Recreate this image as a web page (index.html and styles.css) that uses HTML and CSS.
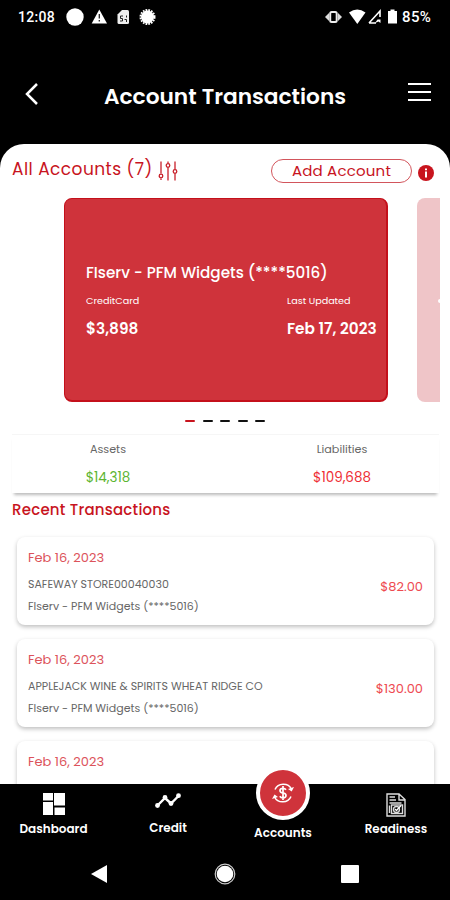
FILE: index.html
```html
<!DOCTYPE html>
<html lang="en">
<head>
    <meta charset="UTF-8">
    <meta name="viewport" content="width=device-width, initial-scale=1.0">
    <title>Account Transactions</title>
    <link rel="stylesheet" href="styles.css">
</head>
<body>
    <div class="status">
        <span class="clock">12:08</span>
        <svg class="status-left" width="92" height="20" viewBox="0 0 92 20" fill="#fff">
            <circle cx="9" cy="10" r="8.7"/>
            <path d="M33.3 2.5 41 16.5H25.7Z"/>
            <path d="M33.3 7v4.5M33.3 13v1.6" stroke="#222" stroke-width="1.3"/>
            <path d="M56 3h5.500a1.500 1.500 0 0 1 1.500 1.500v11a1.500 1.500 0 0 1-1.500 1.500h-8.500a1.500 1.500 0 0 1-1.500-1.500V7.500Z" fill="#eee"/>
            <path d="M57 9h-2.500v2.500h2V14h-2.500M60.500 8.500v2M58.500 12.500h2V15" fill="none" stroke="#222"/>
            <circle cx="81.500" cy="10" r="6.500"/>
            <circle cx="81.500" cy="10" r="7" fill="none" stroke="#fff" stroke-width="2" stroke-dasharray="1.700 1.100"/>
        </svg>
        <svg class="status-right" width="76" height="20" viewBox="0 0 76 20" fill="#fff">
            <path d="M0 10 4 6v8ZM17 10l-4-4v8Z" fill="#ddd"/>
            <rect x="5.200" y="5" width="6.500" height="10" rx="1.500" fill="none" stroke="#eee" stroke-width="2"/>
            <path d="M24 5.500Q32.300-.5 40.500 5.500L32.300 17Z"/>
            <path d="M44 16 55 4v6M44 16h7" fill="none" stroke="#fff" stroke-width="1.600"/>
            <path d="m50 16 2.500-3.500h3V16l-2-1.500Z"/>
            <path d="M65.500 2.500h4V4H72v12.500h-9V4h2.500Z"/>
        </svg>
        <span class="battery">85%</span>
    </div>

    <header class="header">
        <svg class="back" width="14" height="22" viewBox="0 0 14 22"><path d="M12 1 2 11l10 10" fill="none" stroke="#fff" stroke-width="2.500"/></svg>
        <h1>Account Transactions</h1>
        <div class="menu"><i></i><i></i><i></i></div>
    </header>

    <main class="sheet">
        <div class="toolbar">
            <span class="all">All Accounts (7)</span>
            <svg class="filter" width="20" height="20" viewBox="0 0 20 20" fill="none" stroke="#c8202a" stroke-width="1.300">
                <path d="M3 .5v12M3 17.500V19M10 .5v2M10 6.500V19.500M17 .5v8M17 12.500v7"/>
                <circle cx="3" cy="15" r="1.800"/><circle cx="10" cy="4.500" r="1.800"/><circle cx="17" cy="10.500" r="1.800"/>
            </svg>
            <button class="add">Add Account</button>
            <svg class="info" width="16" height="16" viewBox="0 0 16 16"><circle cx="8" cy="8" r="8" fill="#c8141e"/><path d="M8 3.500v1.800M8 6.500v6" stroke="#fff" stroke-width="2"/></svg>
        </div>

        <section class="carousel">
            <div class="account">
                <div class="account-name">FIserv - PFM Widgets (****5016)</div>
                <div class="account-info">
                    <div>
                        <div class="label">CreditCard</div>
                        <div class="value">$3,898</div>
                    </div>
                    <div>
                        <div class="label">Last Updated</div>
                        <div class="value">Feb 17, 2023</div>
                    </div>
                </div>
            </div>
            <div class="account next"><i></i></div>
        </section>
        <div class="dots"><i class="active"></i><i></i><i></i><i></i><i></i></div>

        <section class="summary">
            <div class="assets">
                <span>Assets</span>
                <b>$14,318</b>
            </div>
            <div class="liabilities">
                <span>Liabilities</span>
                <b>$109,688</b>
            </div>
        </section>

        <h2>Recent Transactions</h2>
        <section class="list">
            <article class="item">
                <div>
                    <div class="date">Feb 16, 2023</div>
                    <div class="store">SAFEWAY STORE00040030</div>
                    <div class="source">FIserv - PFM Widgets (****5016)</div>
                </div>
                <span class="amount">$82.00</span>
            </article>
            <article class="item">
                <div>
                    <div class="date">Feb 16, 2023</div>
                    <div class="store">APPLEJACK WINE &amp; SPIRITS WHEAT RIDGE CO</div>
                    <div class="source">FIserv - PFM Widgets (****5016)</div>
                </div>
                <span class="amount">$130.00</span>
            </article>
            <article class="item">
                <div>
                    <div class="date">Feb 16, 2023</div>
                </div>
            </article>
        </section>
    </main>

    <nav class="tabs">
        <a class="tab dashboard">
            <svg width="22" height="22" viewBox="0 0 22 22" fill="#fff"><path d="M0 0h10v7.500H0ZM11 0H22v12.500H11ZM0 9h10v13H0ZM11.500 14.500H22V22H11.500Z"/></svg>
            <span>Dashboard</span>
        </a>
        <a class="tab credit">
            <svg width="26" height="16" viewBox="0 0 26 16" fill="#fff"><path d="M2.500 12.500 10 5l6 5.500L23.500 3" fill="none" stroke="#fff" stroke-width="2.400"/><circle cx="2.500" cy="12.500" r="2.400"/><circle cx="10" cy="4.500" r="2.400"/><circle cx="16" cy="10.500" r="2.400"/><circle cx="23.500" cy="2.700" r="2.400"/></svg>
            <span>Credit</span>
        </a>
        <a class="tab accounts">
            <div class="bubble">
                <svg width="24" height="22" viewBox="0 0 24 22" fill="none" stroke="#fff" stroke-width="1.500">
                    <path d="M4 7.500A9 8.500 0 0 1 20.500 7M20 14.500A9 8.500 0 0 1 3.500 15"/>
                    <path d="m23 5-2.300 4.500L17 7ZM1 17l2.500-4.500L7 15Z" fill="#fff" stroke="none"/>
                    <path d="M15 7.800q-1-1.500-3-1.500-3 0-3 2.300t3 2.400 3 2.400-3 2.400q-2.200 0-3.200-1.600M12 4v14" stroke-width="1.700"/>
                </svg>
            </div>
            <span>Accounts</span>
        </a>
        <a class="tab readiness">
            <svg width="20" height="24" viewBox="0 0 20 24" fill="none" stroke="#ddd" stroke-width="1.400">
                <path d="M1 1h12l6 5.500V23H1ZM13 1v6h6"/>
                <path d="M3.500 4H9M3.500 7H10M3.500 10h12M3.500 12.500V20"/>
                <rect x="5.500" y="12" width="11" height="8.500"/>
                <circle cx="10.500" cy="16.500" r="3"/><path d="m9 16 1.500 1.500 4.500-5" stroke="#fff"/>
            </svg>
            <span>Readiness</span>
        </a>
    </nav>

    <footer class="system">
        <svg width="16" height="18" viewBox="0 0 16 18"><path d="M0 9 16 0v18Z" fill="#fff"/></svg>
        <svg class="home" width="22" height="22" viewBox="0 0 22 22"><circle cx="11" cy="11" r="9.800" fill="none" stroke="#ccc" stroke-width="1.200"/><circle cx="11" cy="11" r="8.300" fill="#fff"/></svg>
        <svg width="18" height="18" viewBox="0 0 18 18"><rect width="18" height="18" rx="1" fill="#fff"/></svg>
    </footer>
</body>
</html>
```
FILE: styles.css
```css
:root {
    --red: #cf333b;
    --dark-red: #c8141e;
    --grey: #666;
}

* {
    box-sizing: border-box;
}

body {
    font-family: Poppins, Inter, "Open Sans", sans-serif;
    margin: 0;
    width: 450px;
    height: 900px;
    display: flex;
    flex-direction: column;
    overflow: hidden;
    background: #000;
    white-space: nowrap;
}

svg {
    display: block;
    flex: none;
}

/* android status bar */
.status {
    display: flex;
    align-items: center;
    height: 33px;
    padding: 0 17px 0 18px;
    color: #fff;
    font: 500 14px/20px Roboto, sans-serif;
}

.clock {
    width: 48px;
    letter-spacing: 0.3px;
}

.status-right {
    margin-left: auto;
}

.battery {
    width: 31px;
    margin-left: 1px;
    font-size: 15px;
    letter-spacing: 0.4px;
}

.header {
    display: flex;
    align-items: center;
    height: 111px;
    padding: 14px 19px 0 25px;
    color: #fff;
}

.header .back {
    margin-top: -4px;
}

h1 {
    margin: 3px 0 0 65px;
    font-size: 21.7px;
    line-height: 30px;
    font-weight: 600;
}

.menu {
    display: flex;
    flex-direction: column;
    gap: 6px;
    width: 23px;
    margin: -8px 0 0 auto;
}

.menu i {
    height: 2px;
    background: #fff;
}

.sheet {
    height: 640px;
    overflow: hidden;
    background: #fff;
    border-radius: 24px 24px 0 0;
}

.toolbar {
    display: flex;
    align-items: center;
    height: 54px;
    padding: 0 16px 0 12px;
    color: var(--dark-red);
}

.all {
    width: 146px;
    margin-top: -4px;
    font-size: 17px;
    letter-spacing: 0.45px;
}

.filter {
    margin-top: -1px;
}

.add {
    width: 141px;
    height: 24px;
    margin: 0 6px 0 auto;
    padding: 0;
    border: 1px solid #d2555c;
    border-radius: 12px;
    background: #fff;
    color: var(--dark-red);
    font: 400 15px/20px Poppins, Inter, sans-serif;
    letter-spacing: 0.2px;
}

.info {
    margin-top: 3px;
}

.carousel {
    display: flex;
    gap: 29px;
    height: 204px;
    margin: 0 10px 0 64px;
    overflow: hidden;
}

.account {
    flex: none;
    width: 324px;
    padding: 62px 0 0 21px;
    border: 1px solid #c4101b;
    border-right-width: 2px;
    border-bottom-width: 2px;
    border-radius: 8px;
    background: var(--red);
    color: #fff;
}

.next {
    padding-top: 101px;
    border: 0;
    background: #efc5c8;
}

.next i {
    display: block;
    width: 4px;
    height: 4px;
    border-radius: 2px;
    background: #fff;
}

.account-name {
    font-size: 15.2px;
    line-height: 24px;
    font-weight: 500;
}

.account-info {
    display: grid;
    grid-template-columns: 201px 1fr;
    margin-top: 8px;
}

.label {
    font-size: 9.6px;
    line-height: 15px;
}

.value {
    margin-top: 10px;
    font-size: 15.3px;
    line-height: 22px;
    font-weight: 600;
}

.dots {
    display: flex;
    justify-content: center;
    gap: 7.5px;
    height: 32px;
    padding-top: 18px;
}

.dots i {
    width: 10px;
    height: 2px;
    border-radius: 1px;
    background: #111;
}

.dots .active {
    background: var(--dark-red);
}

.summary {
    display: flex;
    height: 59px;
    margin: 0 11px 0 12px;
    border-top: 1px solid #f6f6f6;
    box-shadow: 0 4px 3px -2px #bbb;
}

.summary div {
    width: 192px;
    padding-top: 5px;
    text-align: center;
}

.summary .liabilities {
    width: 235px;
    padding-left: 41px;
}

.summary span,
.summary b {
    display: block;
    font-size: 11.2px;
    line-height: 18px;
    color: var(--grey);
}

.summary b {
    margin-top: 11px;
    font-size: 13.5px;
    font-weight: 400;
    color: #5cb531;
}

.summary .liabilities b {
    color: #ee2e35;
}

h2 {
    margin: 0 0 0 12px;
    padding-top: 5px;
    height: 44px;
    font-size: 15px;
    line-height: 24px;
    font-weight: 500;
    letter-spacing: 0.22px;
    color: var(--dark-red);
}

.list {
    display: grid;
    gap: 14px;
    padding: 0 16px 0 17px;
}

.item {
    display: flex;
    align-items: center;
    justify-content: space-between;
    height: 88px;
    padding: 0 11px;
    border-radius: 8px;
    background: #fff;
    box-shadow: 0 2px 4px rgba(0, 0, 0, 0.25);
}

.item > div {
    height: 88px;
    padding-top: 11px;
}

.date {
    font-size: 13px;
    line-height: 20px;
    color: #dc535b;
}

.store,
.source {
    margin-top: 6px;
    font-size: 11px;
    line-height: 20px;
    color: var(--grey);
}

.source {
    margin-top: 2px;
}

.amount {
    margin-top: 11px;
    font-size: 13px;
    color: #ee4a50;
}

/* bottom tabs */
.tabs {
    display: flex;
    height: 64px;
    color: #fff;
    font-size: 12px;
    line-height: 18px;
    font-weight: 600;
}

.tab {
    display: flex;
    flex-direction: column;
    align-items: center;
    width: 113px;
    padding-top: 9px;
}

.tab span {
    margin-top: 5px;
}

.dashboard {
    width: 107px;
}

.credit {
    width: 122px;
}

.credit span {
    margin-top: 10px;
}

.accounts {
    width: 108px;
    padding-top: 0;
}

.bubble {
    display: flex;
    align-items: center;
    justify-content: center;
    flex: none;
    width: 54px;
    height: 54px;
    margin-top: -18px;
    border: 4px solid #fff;
    border-radius: 50%;
    background: var(--red);
}

.accounts span {
    margin-top: 4px;
}

.readiness {
    padding-left: 5px;
    font-size: 11.9px;
}

.readiness span {
    margin-top: 3px;
}

.system {
    display: flex;
    align-items: center;
    justify-content: space-between;
    height: 52px;
    padding: 0 91px;
}

.home {
    margin-left: 2px;
}
```
